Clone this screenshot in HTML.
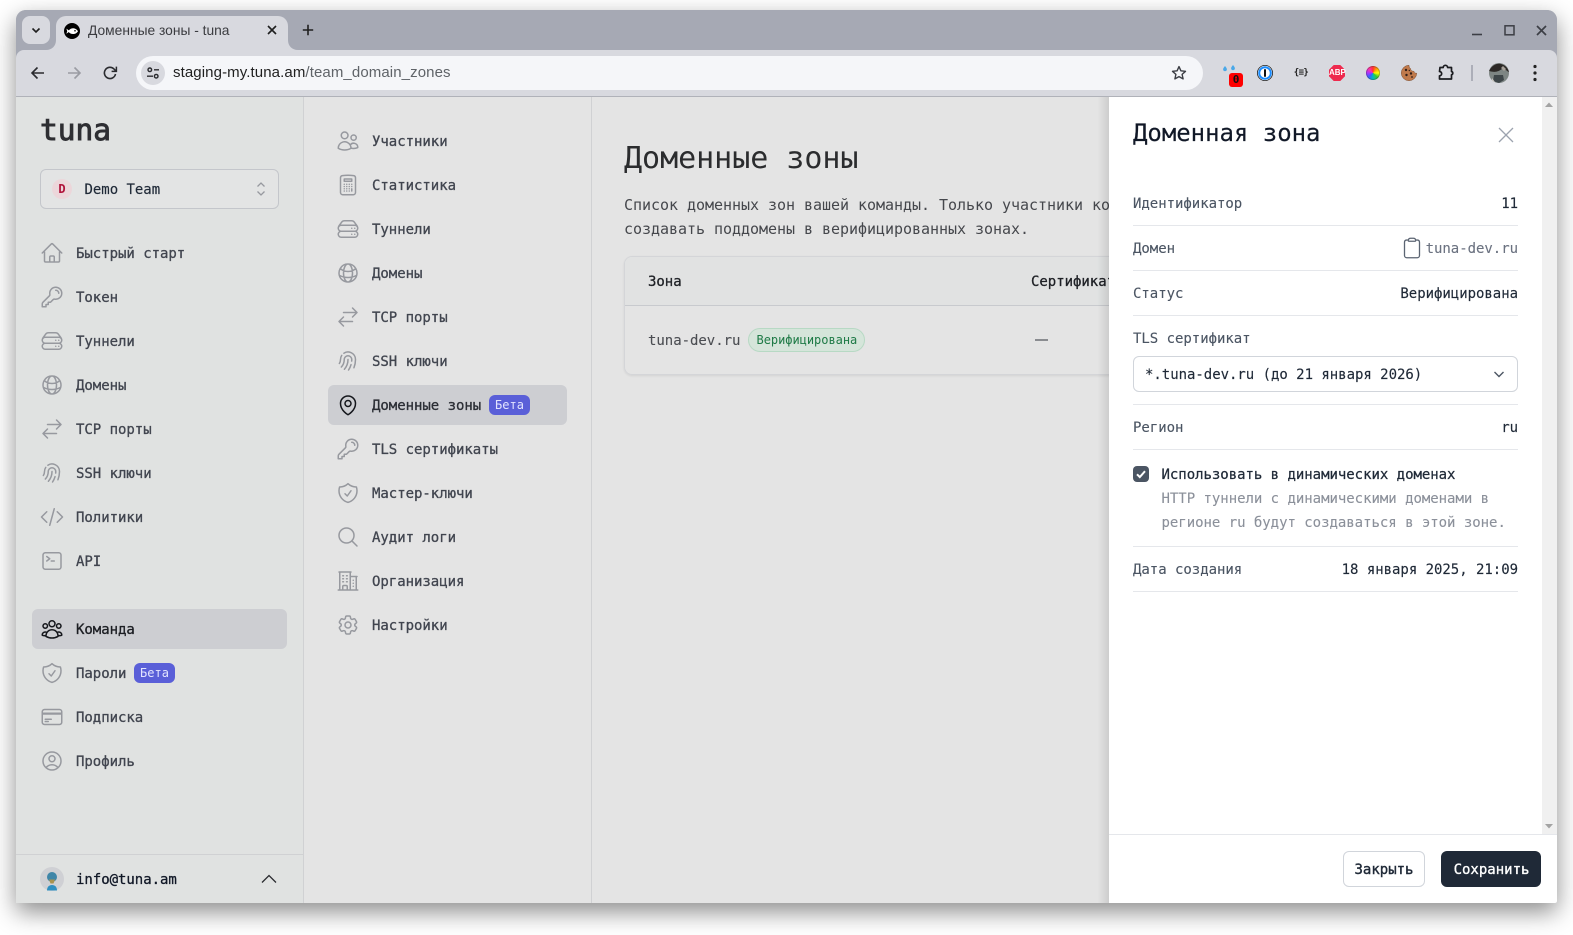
<!DOCTYPE html>
<html lang="ru"><head><meta charset="utf-8"><title>Доменные зоны - tuna</title>
<style>
*{box-sizing:border-box}
html,body{margin:0;padding:0;background:#fff;width:1573px;height:935px;overflow:hidden}
body{font-family:"DejaVu Sans Mono","Liberation Mono","Noto Sans CJK SC",monospace;font-size:14px}
#win{position:absolute;left:16px;top:10px;width:1541px;height:893px;border-radius:10px 10px 2px 2px;box-shadow:0 9px 24px rgba(0,0,0,.45);background:#a6a9b4}
#clip{position:absolute;left:0;top:0;width:1573px;height:935px;overflow:hidden}
.a{position:absolute}
.t{position:absolute;white-space:nowrap;line-height:20px;letter-spacing:-.03px;margin-top:1px}
.z{margin-top:0}
.u{font-family:"Liberation Sans","Noto Sans CJK SC",sans-serif;letter-spacing:0}
.n{color:#41454f;-webkit-text-stroke:.3px #41454f}
.i{position:absolute;width:24px;height:24px;fill:none;stroke:#97999f;stroke-width:1.5;stroke-linecap:round;stroke-linejoin:round}
.on{stroke:#15171c}
.b{position:absolute;width:41px;height:20px;border-radius:6px;background:#5a5fd8;color:#e2e4ff;font-size:12px;line-height:20px;text-align:center}
.line{position:absolute;left:1133px;width:385px;height:1px;background:#e5e7eb}
.lab{color:#4b5563;-webkit-text-stroke:.12px #4b5563}.val{color:#1f2937;-webkit-text-stroke:.15px #1f2937}
.r{text-align:right}
</style></head><body>
<svg width="0" height="0" style="position:absolute">
<defs>
<symbol id="home" viewBox="0 0 24 24"><path d="M2.25 12l8.954-8.955c.44-.439 1.152-.439 1.591 0L21.75 12M4.5 9.75v10.125c0 .621.504 1.125 1.125 1.125H9.75v-4.875c0-.621.504-1.125 1.125-1.125h2.25c.621 0 1.125.504 1.125 1.125V21h4.125c.621 0 1.125-.504 1.125-1.125V9.75M8.25 21h8.25"/></symbol>
<symbol id="key" viewBox="0 0 24 24"><path d="M15.75 5.25a3 3 0 013 3m3 0a6 6 0 01-7.029 5.912c-.563-.097-1.159.026-1.563.43L10.5 17.25H8.25v2.25H6v2.25H2.25v-2.818c0-.597.237-1.17.659-1.591l6.499-6.499c.404-.404.527-1 .43-1.563A6 6 0 1121.75 8.25z"/></symbol>
<symbol id="srv" viewBox="0 0 24 24"><path d="M5.25 14.25h13.5m-13.5 0a3 3 0 01-3-3m3 3a3 3 0 100 6h13.5a3 3 0 100-6m-16.5-3a3 3 0 013-3h13.5a3 3 0 013 3m-19.5 0a4.5 4.5 0 01.9-2.7L5.737 5.1a3.375 3.375 0 012.7-1.35h7.126c1.062 0 2.062.5 2.7 1.35l2.587 3.45a4.5 4.5 0 01.9 2.7m0 0a3 3 0 01-3 3m0 3h.008v.008h-.008v-.008zm0-6h.008v.008h-.008v-.008zm-3 6h.008v.008h-.008v-.008zm0-6h.008v.008h-.008v-.008z"/></symbol>
<symbol id="globe" viewBox="0 0 24 24"><path d="M12 21a9.004 9.004 0 008.716-6.747M12 21a9.004 9.004 0 01-8.716-6.747M12 21c2.485 0 4.5-4.03 4.5-9S14.485 3 12 3m0 18c-2.485 0-4.5-4.03-4.5-9S9.515 3 12 3m0 0a8.997 8.997 0 017.843 4.582M12 3a8.997 8.997 0 00-7.843 4.582m15.686 0A11.953 11.953 0 0112 10.5c-2.998 0-5.74-1.1-7.843-2.918m15.686 0A8.959 8.959 0 0121 12c0 .778-.099 1.533-.284 2.253m0 0A17.919 17.919 0 0112 16.5c-3.162 0-6.133-.815-8.716-2.247m0 0A9.015 9.015 0 013 12c0-1.605.42-3.113 1.157-4.418"/></symbol>
<symbol id="arr" viewBox="0 0 24 24"><path d="M7.5 21L3 16.5m0 0L7.5 12M3 16.5h13.5m0-13.5L21 7.5m0 0L16.5 12M21 7.5H7.5"/></symbol>
<symbol id="fp" viewBox="0 0 24 24"><path d="M7.864 4.243A7.5 7.5 0 0119.5 10.5c0 2.92-.556 5.709-1.568 8.268M5.742 6.364A7.465 7.465 0 004.5 10.5a7.464 7.464 0 01-1.15 3.993m1.989 3.559A11.209 11.209 0 008.25 10.5a3.75 3.75 0 117.5 0c0 .527-.021 1.049-.064 1.565M12 10.5a14.94 14.94 0 01-3.6 9.75m6.633-4.596a18.666 18.666 0 01-2.485 5.33"/></symbol>
<symbol id="code" viewBox="0 0 24 24"><path d="M17.25 6.75L22.5 12l-5.25 5.25m-10.5 0L1.5 12l5.25-5.25m7.5-3l-4.5 16.5"/></symbol>
<symbol id="cmd" viewBox="0 0 24 24"><path d="M6.75 7.5l3 2.25-3 2.25m4.5 0h3m-9 8.25h13.5A2.25 2.25 0 0021 18V6a2.25 2.25 0 00-2.25-2.25H5.25A2.25 2.25 0 003 6v12a2.25 2.25 0 002.25 2.25z"/></symbol>
<symbol id="grp" viewBox="0 0 24 24"><path d="M18 18.72a9.094 9.094 0 003.741-.479 3 3 0 00-4.682-2.72m.94 3.198l.001.031c0 .225-.012.447-.037.666A11.944 11.944 0 0112 21c-2.17 0-4.207-.576-5.963-1.584A6.062 6.062 0 016 18.719m12 0a5.971 5.971 0 00-.941-3.197m0 0A5.995 5.995 0 0012 12.75a5.995 5.995 0 00-5.058 2.772m0 0a3 3 0 00-4.681 2.72 8.986 8.986 0 003.74.477m.94-3.197a5.971 5.971 0 00-.94 3.197M15 6.75a3 3 0 11-6 0 3 3 0 016 0zm6 2.25a2.25 2.25 0 11-4.5 0 2.25 2.25 0 014.5 0zm-13.5 0a2.25 2.25 0 11-4.5 0 2.25 2.25 0 014.5 0z"/></symbol>
<symbol id="shield" viewBox="0 0 24 24"><path d="M9 12.75L11.25 15 15 9.75m-3-7.036A11.959 11.959 0 013.598 6 11.99 11.99 0 003 9.749c0 5.592 3.824 10.29 9 11.623 5.176-1.332 9-6.03 9-11.622 0-1.31-.21-2.571-.598-3.751h-.152c-3.196 0-6.1-1.248-8.25-3.285z"/></symbol>
<symbol id="card" viewBox="0 0 24 24"><path d="M2.25 8.25h19.5M2.25 9h19.5m-16.5 5.25h6m-6 2.25h3m-3.75 3h15a2.25 2.25 0 002.25-2.25V6.75A2.25 2.25 0 0019.5 4.5h-15a2.25 2.25 0 00-2.25 2.25v10.5A2.25 2.25 0 004.5 19.5z"/></symbol>
<symbol id="uc" viewBox="0 0 24 24"><path d="M17.982 18.725A7.488 7.488 0 0012 15.75a7.488 7.488 0 00-5.982 2.975m11.963 0a9 9 0 10-11.963 0m11.963 0A8.966 8.966 0 0112 21a8.966 8.966 0 01-5.982-2.275M15 9.75a3 3 0 11-6 0 3 3 0 016 0z"/></symbol>
<symbol id="users" viewBox="0 0 24 24"><path d="M15 19.128a9.38 9.38 0 002.625.372 9.337 9.337 0 004.121-.952 4.125 4.125 0 00-7.533-2.493M15 19.128v-.003c0-1.113-.285-2.16-.786-3.07M15 19.128v.106A12.318 12.318 0 018.624 21c-2.331 0-4.512-.645-6.374-1.766l-.001-.109a6.375 6.375 0 0111.964-3.07M12 6.375a3.375 3.375 0 11-6.75 0 3.375 3.375 0 016.75 0zm8.25 2.25a2.625 2.625 0 11-5.25 0 2.625 2.625 0 015.25 0z"/></symbol>
<symbol id="calc" viewBox="0 0 24 24"><path d="M15.75 15.75V18m-7.5-6.75h.008v.008H8.25v-.008zm0 2.25h.008v.008H8.25V13.5zm0 2.25h.008v.008H8.25v-.008zm0 2.25h.008v.008H8.25V18zm2.498-6.75h.007v.008h-.007v-.008zm0 2.25h.007v.008h-.007V13.5zm0 2.25h.007v.008h-.007v-.008zm0 2.25h.007v.008h-.007V18zm2.504-6.75h.008v.008h-.008v-.008zm0 2.25h.008v.008h-.008V13.5zm0 2.25h.008v.008h-.008v-.008zm0 2.25h.008v.008h-.008V18zm2.498-6.75h.008v.008h-.008v-.008zm0 2.25h.008v.008h-.008V13.5zM8.25 6h7.5v2.25h-7.5V6zM12 2.25c-1.892 0-3.758.11-5.593.322C5.307 2.7 4.5 3.65 4.5 4.757V19.5a2.25 2.25 0 002.25 2.25h10.5a2.25 2.25 0 002.25-2.25V4.757c0-1.108-.806-2.057-1.907-2.185A48.507 48.507 0 0012 2.25z"/></symbol>
<symbol id="pin" viewBox="0 0 24 24"><path d="M15 10.5a3 3 0 11-6 0 3 3 0 016 0z"/><path d="M19.5 10.5c0 7.142-7.5 11.25-7.5 11.25S4.5 17.642 4.5 10.5a7.5 7.5 0 1115 0z"/></symbol>
<symbol id="mag" viewBox="0 0 24 24"><path d="M21 21l-5.197-5.197m0 0A7.5 7.5 0 105.196 5.196a7.5 7.5 0 0010.607 10.607z"/></symbol>
<symbol id="bld" viewBox="0 0 24 24"><path d="M2.25 21h19.5m-18-18v18m10.5-18v18m6-13.5V21M6.75 6.75h.75m-.75 3h.75m-.75 3h.75m3-6h.75m-.75 3h.75m-.75 3h.75M6.75 21v-3.375c0-.621.504-1.125 1.125-1.125h2.25c.621 0 1.125.504 1.125 1.125V21M3 3h12m-.75 4.5H21m-3.75 3.75h.008v.008h-.008v-.008zm0 3h.008v.008h-.008v-.008zm0 3h.008v.008h-.008v-.008z"/></symbol>
<symbol id="cog" viewBox="0 0 24 24"><path d="M9.594 3.94c.09-.542.56-.94 1.11-.94h2.593c.55 0 1.02.398 1.11.94l.213 1.281c.063.374.313.686.645.87.074.04.147.083.22.127.324.196.72.257 1.075.124l1.217-.456a1.125 1.125 0 011.37.49l1.296 2.247a1.125 1.125 0 01-.26 1.431l-1.003.827c-.293.24-.438.613-.431.992a6.759 6.759 0 010 .255c-.007.378.138.75.43.99l1.005.828c.424.35.534.954.26 1.43l-1.298 2.247a1.125 1.125 0 01-1.369.491l-1.217-.456c-.355-.133-.75-.072-1.076.124a6.57 6.57 0 01-.22.128c-.331.183-.581.495-.644.869l-.213 1.28c-.09.543-.56.941-1.11.941h-2.594c-.55 0-1.02-.398-1.11-.94l-.213-1.281c-.062-.374-.312-.686-.644-.87a6.52 6.52 0 01-.22-.127c-.325-.196-.72-.257-1.076-.124l-1.217.456a1.125 1.125 0 01-1.369-.49l-1.297-2.247a1.125 1.125 0 01.26-1.431l1.004-.827c.292-.24.437-.613.43-.992a6.932 6.932 0 010-.255c.007-.378-.138-.75-.43-.99l-1.004-.828a1.125 1.125 0 01-.26-1.43l1.297-2.247a1.125 1.125 0 011.37-.491l1.216.456c.356.133.751.072 1.076-.124.072-.044.146-.087.22-.128.332-.183.582-.495.644-.869l.214-1.281z"/><path d="M15 12a3 3 0 11-6 0 3 3 0 016 0z"/></symbol>
<symbol id="clipb" viewBox="0 0 24 24"><path d="M15.666 3.888A2.25 2.25 0 0013.5 2.25h-3c-1.03 0-1.9.693-2.166 1.638m7.332 0c.055.194.084.4.084.612v0a.75.75 0 01-.75.75H9a.75.75 0 01-.75-.75v0c0-.212.03-.418.084-.612m7.332 0c.646.049 1.288.11 1.927.184 1.1.128 1.907 1.077 1.907 2.185V19.5a2.25 2.25 0 01-2.25 2.25H6.75A2.25 2.25 0 014.5 19.5V6.257c0-1.108.806-2.057 1.907-2.185a48.208 48.208 0 011.927-.184"/></symbol>
</defs>
</svg>

<div id="win"></div>
<div id="clip">
<!-- window chrome -->
<div class="a" style="left:16px;top:10px;width:1541px;height:40px;background:#a6a9b4;border-radius:10px 10px 0 0"></div>
<div class="a" style="left:16px;top:50px;width:1541px;height:47px;background:#d8d9df;border-radius:8px 8px 0 0;border-bottom:1px solid #b0b2b9"></div>
<div class="a" style="left:22px;top:16px;width:28px;height:28px;border-radius:8px;background:#d8d9df"></div>
<svg class="a" style="left:30px;top:24px" width="12" height="12" viewBox="0 0 12 12" fill="none" stroke="#1f1f1f" stroke-width="1.6"><path d="M2.5 4.5L6 8l3.5-3.5"/></svg>
<div class="a" style="left:56px;top:16px;width:232px;height:34px;background:#d8d9df;border-radius:10px 10px 0 0"></div>
<svg class="a" style="left:288px;top:40px" width="10" height="10" viewBox="0 0 10 10"><path d="M0 0C0 6 4 10 10 10H0z" fill="#d8d9df"/></svg>
<svg class="a" style="left:46px;top:40px" width="10" height="10" viewBox="0 0 10 10"><path d="M10 0C10 6 6 10 0 10H10z" fill="#d8d9df"/></svg>
<svg class="a" style="left:64px;top:23px" width="16" height="16" viewBox="0 0 16 16"><circle cx="8" cy="8" r="8" fill="#000"/><path d="M2.4 5.600L4.800 7.400C6.200 5.600 9 4.800 11 5.600 12.400 6.200 13.400 7.200 14 8.200 13.200 9.600 11.600 10.800 9.800 11 7.600 11.300 5.800 10.400 4.800 9L2.400 10.800 3.200 8.200z" fill="#fff"/><circle cx="11" cy="7.800" r=".8" fill="#000"/></svg>
<div class="t u z" style="left:88px;top:21px;font-size:13.800px;color:#3b3c40">Доменные зоны - tuna</div>
<svg class="a" style="left:266px;top:24px" width="12" height="12" viewBox="0 0 12 12" fill="none" stroke="#1f1f1f" stroke-width="1.6"><path d="M2 2l8 8M10 2l-8 8"/></svg>
<svg class="a" style="left:302px;top:24px" width="12" height="12" viewBox="0 0 12 12" fill="none" stroke="#1f1f1f" stroke-width="1.6"><path d="M6 .8v10.400M.8 6h10.400"/></svg>
<svg class="a" style="left:1472px;top:24px" width="80" height="14" viewBox="0 0 80 14" fill="none" stroke="#3c3e45" stroke-width="1.6"><path d="M0 10.500h10"/><rect x="33" y="1.800" width="9" height="9" stroke-width="1.500"/><path d="M65 2l9 9M74 2l-9 9" stroke-width="1.700"/></svg>

<svg class="a" style="left:29px;top:64px" width="18" height="18" viewBox="0 0 18 18" fill="none" stroke="#2a2b2f" stroke-width="1.6"><path d="M15 9H3.500M8.500 3.500L3 9l5.500 5.500"/></svg>
<svg class="a" style="left:65px;top:64px" width="18" height="18" viewBox="0 0 18 18" fill="none" stroke="#9a9ca3" stroke-width="1.6"><path d="M3 9h11.500M9.500 3.500L15 9l-5.500 5.500"/></svg>
<svg class="a" style="left:101px;top:64px" width="18" height="18" viewBox="0 0 18 18" fill="none" stroke="#2a2b2f" stroke-width="1.6"><path d="M14.500 10a5.600 5.600 0 11-1.500-5L15 7"/><path d="M15.400 2.600V7.400H10.600" stroke-width="1.500"/></svg>

<div class="a" style="left:136px;top:56px;width:1067px;height:34px;border-radius:17px;background:#f5f6f9"></div>
<div class="a" style="left:141px;top:61px;width:24px;height:24px;border-radius:12px;background:#d8d9df"></div>
<svg class="a" style="left:146px;top:66px" width="14" height="14" viewBox="0 0 14 14" fill="none" stroke="#2a2b2f" stroke-width="1.4"><circle cx="3.800" cy="3.800" r="1.800"/><path d="M8 3.800h5M1 10.200h6"/><circle cx="10.200" cy="10.200" r="1.800"/></svg>
<div class="t u" style="left:173px;top:62px;font-size:15px;letter-spacing:.1px;color:#1f1f1f">staging-my.tuna.am<span style="color:#5f6368">/team_domain_zones</span></div>
<svg class="a" style="left:1171px;top:65px" width="16" height="16" viewBox="0 0 16 16" fill="none" stroke="#3c3e45" stroke-width="1.4" stroke-linejoin="round"><path d="M8 1.600l1.900 4.200 4.600.5-3.400 3.100 1 4.500L8 11.600l-4.100 2.300 1-4.500L1.500 6.300l4.600-.5z"/></svg>

<!-- extensions -->
<svg class="a" style="left:1222px;top:63px" width="24" height="26" viewBox="0 0 24 26"><path d="M3 3c1.200 1.500 1.900 2.400 1.900 3.300a1.900 1.900 0 01-3.800 0c0-.9.700-1.800 1.900-3.300zM11 2c1.200 1.500 1.900 2.400 1.900 3.300a1.900 1.900 0 01-3.800 0c0-.9.700-1.800 1.900-3.300z" fill="#4aa8e8"/><rect x="7" y="10" width="14" height="14" rx="3" fill="#f00"/></svg>
<div class="t z" style="left:1231px;top:70px;width:10px;text-align:center;font-size:11px;font-weight:bold;color:#111">0</div>
<svg class="a" style="left:1257px;top:65px" width="16" height="16" viewBox="0 0 16 16"><circle cx="8" cy="8" r="7.600" fill="#fff" stroke="#1a1a1a" stroke-width=".8"/><circle cx="8" cy="8" r="5.800" fill="none" stroke="#1a8cff" stroke-width="2"/><rect x="7" y="4" width="2" height="8" rx="1" fill="#111"/></svg>
<div class="t z" style="left:1291px;top:63px;width:20px;text-align:center;font-size:9px;font-weight:bold;color:#222;letter-spacing:-.6px">{≡}</div>
<svg class="a" style="left:1329px;top:65px" width="16" height="16" viewBox="0 0 16 16"><path d="M4.700 0h6.600L16 4.700v6.600L11.300 16H4.700L0 11.300V4.700z" fill="#ee2a4e"/></svg>
<div class="t u z" style="left:1329px;top:63px;width:16px;text-align:center;font-size:8px;font-weight:bold;color:#fff">ABP</div>
<div class="a" style="left:1366px;top:66px;width:14px;height:14px;border-radius:50%;background:conic-gradient(#f33,#fa0,#ff0,#3c3,#0bb,#36f,#a3f,#f3a,#f33);box-shadow:inset 0 0 0 1px rgba(40,40,40,.3)"></div>
<svg class="a" style="left:1401px;top:65px" width="16" height="16" viewBox="0 0 16 16"><path d="M8 .3a7.700 7.700 0 107.700 7.900c-1.700.2-2.600-.7-2.800-2C11.300 6.400 9.700 5.500 9.700 3.700 8.500 3.300 8 2 8 .3z" fill="#c07a4c" stroke="#7a4a2c" stroke-width=".5"/><g fill="#33201a"><circle cx="5" cy="5" r="1.200"/><circle cx="10" cy="8.500" r="1.200"/><circle cx="5.500" cy="10" r="1.200"/><circle cx="11" cy="12" r=".9"/><circle cx="8.300" cy="5.500" r=".7"/></g></svg>
<svg class="a" style="left:1437px;top:64px" width="18" height="18" viewBox="0 0 18 18" fill="none" stroke="#1b1c20" stroke-width="1.700" stroke-linejoin="round"><path d="M3 3.500h3.200a2.200 2.200 0 014.400 0h3.900v4a1.700 1.700 0 010 3.300v4.200H2.500v-3.200a2 2 0 000-4.300z"/></svg>
<div class="a" style="left:1471px;top:65px;width:2px;height:16px;background:#acaeb8"></div>
<svg class="a" style="left:1489px;top:63px" width="20" height="20" viewBox="0 0 20 20"><circle cx="10" cy="10" r="10" fill="#7d8583"/><path d="M0 8C3 2 8 0 12 1c4 1 7 4 8 8-3-1-4-4-7-3-3 2-6 4-13 2z" fill="#2c2826"/><path d="M5 12h9l1 5-5 3-6-2z" fill="#3e4649"/><path d="M14 3l3 3-2 2-3-3z" fill="#a8a29a"/><path d="M3 15l3 4-3-1z" fill="#c9c6c0"/></svg>
<svg class="a" style="left:1532px;top:64px" width="6" height="18" viewBox="0 0 6 18" fill="#222"><circle cx="3" cy="2.500" r="1.600"/><circle cx="3" cy="9" r="1.600"/><circle cx="3" cy="15.500" r="1.600"/></svg>

<!-- left sidebar -->
<div class="a" style="left:16px;top:97px;width:288px;height:806px;background:#e0e2e1;border-right:1px solid #d0d1d3"></div>
<div class="a" style="left:304px;top:97px;width:288px;height:806px;background:#e4e4e4;border-right:1px solid #d0d1d3"></div>
<div class="a" style="left:592px;top:97px;width:517px;height:806px;background:#e4e4e4"></div>

<div class="t z" style="left:40px;top:115px;line-height:30px;font-size:29.500px;color:#2e2f33;-webkit-text-stroke:.9px #2e2f33">tuna</div>
<div class="a" style="left:40px;top:169px;width:239px;height:40px;border:1px solid #c4c6cb;border-radius:6px;background:#e3e4e4"></div>
<div class="a" style="left:52px;top:179px;width:20px;height:20px;border-radius:50%;background:#ecd6da;color:#b0123a;font-size:12px;font-weight:bold;line-height:20px;text-align:center">D</div>
<div class="t" style="left:84.500px;top:179px;color:#1f2937;-webkit-text-stroke:.15px #1f2937">Demo Team</div>
<svg class="a" style="left:255px;top:181px" width="12" height="16" viewBox="0 0 12 16" fill="none" stroke="#97999f" stroke-width="1.300"><path d="M2.500 5.500L6 2l3.500 3.500M2.500 10.500L6 14l3.500-3.500"/></svg>

<svg class="i" style="left:40px;top:241px"><use href="#home"/></svg><div class="t n" style="left:76px;top:243px">Быстрый старт</div>
<svg class="i" style="left:40px;top:285px"><use href="#key"/></svg><div class="t n" style="left:76px;top:287px">Токен</div>
<svg class="i" style="left:40px;top:329px"><use href="#srv"/></svg><div class="t n" style="left:76px;top:331px">Туннели</div>
<svg class="i" style="left:40px;top:373px"><use href="#globe"/></svg><div class="t n" style="left:76px;top:375px">Домены</div>
<svg class="i" style="left:40px;top:417px"><use href="#arr"/></svg><div class="t n" style="left:76px;top:419px">TCP порты</div>
<svg class="i" style="left:40px;top:461px"><use href="#fp"/></svg><div class="t n" style="left:76px;top:463px">SSH ключи</div>
<svg class="i" style="left:40px;top:505px"><use href="#code"/></svg><div class="t n" style="left:76px;top:507px">Политики</div>
<svg class="i" style="left:40px;top:549px"><use href="#cmd"/></svg><div class="t n" style="left:76px;top:551px">API</div>

<div class="a" style="left:32px;top:609px;width:255px;height:40px;border-radius:6px;background:#cdced2"></div>
<svg class="i on" style="left:40px;top:617px"><use href="#grp"/></svg><div class="t n" style="left:76px;top:619px;color:#1c1e23;-webkit-text-stroke-color:#1c1e23">Команда</div>
<svg class="i" style="left:40px;top:661px"><use href="#shield"/></svg><div class="t n" style="left:76px;top:663px">Пароли</div><div class="b" style="left:134px;top:663px">Бета</div>
<svg class="i" style="left:40px;top:705px"><use href="#card"/></svg><div class="t n" style="left:76px;top:707px">Подписка</div>
<svg class="i" style="left:40px;top:749px"><use href="#uc"/></svg><div class="t n" style="left:76px;top:751px">Профиль</div>

<div class="a" style="left:16px;top:854px;width:287px;height:1px;background:#d0d1d3"></div>
<svg class="a" style="left:40px;top:867px" width="24" height="24" viewBox="0 0 24 24"><circle cx="12" cy="12" r="12" fill="#cfd0d4"/><circle cx="12" cy="10" r="5" fill="#3f86a8"/><path d="M9 12.500h6l-1.500 4h-3z" fill="#a8924e"/><path d="M7 23.500c0-3.500 2-5.500 5-5.500s5 2 5 5.500z" fill="#2f8fc0"/></svg>
<div class="t" style="left:76px;top:869px;color:#111827;-webkit-text-stroke:.3px #111827">info@tuna.am</div>
<svg class="a" style="left:261px;top:872px" width="16" height="14" viewBox="0 0 16 14" fill="none" stroke="#2a2b2f" stroke-width="1.300"><path d="M1 10.500L8 3.500l7 7"/></svg>

<!-- second nav -->
<svg class="i" style="left:336px;top:129px"><use href="#users"/></svg><div class="t n" style="left:372px;top:131px">Участники</div>
<svg class="i" style="left:336px;top:173px"><use href="#calc"/></svg><div class="t n" style="left:372px;top:175px">Статистика</div>
<svg class="i" style="left:336px;top:217px"><use href="#srv"/></svg><div class="t n" style="left:372px;top:219px">Туннели</div>
<svg class="i" style="left:336px;top:261px"><use href="#globe"/></svg><div class="t n" style="left:372px;top:263px">Домены</div>
<svg class="i" style="left:336px;top:305px"><use href="#arr"/></svg><div class="t n" style="left:372px;top:307px">TCP порты</div>
<svg class="i" style="left:336px;top:349px"><use href="#fp"/></svg><div class="t n" style="left:372px;top:351px">SSH ключи</div>
<div class="a" style="left:328px;top:385px;width:239px;height:40px;border-radius:6px;background:#cdced2"></div>
<svg class="i on" style="left:336px;top:393px"><use href="#pin"/></svg><div class="t n" style="left:372px;top:395px;color:#2b2e35;-webkit-text-stroke-color:#2b2e35">Доменные зоны</div><div class="b" style="left:489px;top:395px">Бета</div>
<svg class="i" style="left:336px;top:437px"><use href="#key"/></svg><div class="t n" style="left:372px;top:439px">TLS сертификаты</div>
<svg class="i" style="left:336px;top:481px"><use href="#shield"/></svg><div class="t n" style="left:372px;top:483px">Мастер-ключи</div>
<svg class="i" style="left:336px;top:525px"><use href="#mag"/></svg><div class="t n" style="left:372px;top:527px">Аудит логи</div>
<svg class="i" style="left:336px;top:569px"><use href="#bld"/></svg><div class="t n" style="left:372px;top:571px">Организация</div>
<svg class="i" style="left:336px;top:613px"><use href="#cog"/></svg><div class="t n" style="left:372px;top:615px">Настройки</div>

<!-- main -->
<div class="t z" style="left:624px;top:141px;line-height:36px;font-size:30px;color:#2b2c2e">Доменные зоны</div>
<div class="t z" style="left:624px;top:195px;font-size:15px;color:#45474c">Список доменных зон вашей команды. Только участники команды могут</div>
<div class="t z" style="left:624px;top:219px;font-size:15px;color:#45474c">создавать поддомены в верифицированных зонах.</div>
<div class="a" style="left:623.500px;top:256px;width:600px;height:119px;border:1px solid #d4d5d8;border-radius:8px;box-shadow:0 1px 2px rgba(0,0,0,.08);overflow:hidden">
  <div class="a" style="left:0;top:0;width:100%;height:49px;background:#e1e2e2;border-bottom:1px solid #c8cace"></div>
</div>
<div class="t" style="left:648px;top:271px;color:#1f2126;-webkit-text-stroke:.3px #1f2126">Зона</div>
<div class="t" style="left:1031px;top:271px;color:#1f2126;-webkit-text-stroke:.3px #1f2126">Сертификат</div>
<div class="t" style="left:648px;top:330px;color:#4b4d52;-webkit-text-stroke:.1px #4b4d52">tuna-dev.ru</div>
<div class="a" style="left:748px;top:328px;width:117px;height:24px;border-radius:12px;background:#d5e5da;border:1px solid #b7d9c4"></div>
<div class="t z" style="left:756.500px;top:330px;font-size:12px;color:#1e7a46">Верифицирована</div>
<div class="a" style="left:1035px;top:339px;width:13px;height:1.500px;background:#8a8c90"></div>

<!-- drawer shadow -->
<div class="a" style="left:1097px;top:97px;width:12px;height:806px;background:linear-gradient(90deg,rgba(0,0,0,0),rgba(0,0,0,.1))"></div>

<!-- drawer -->
<div class="a" style="left:1109px;top:97px;width:448px;height:806px;background:#fff;border-radius:0 0 2px 0"></div>
<div class="a" style="left:1542px;top:97px;width:15px;height:737px;background:#f0f0f0"></div>
<svg class="a" style="left:1544px;top:101px" width="10" height="8" viewBox="0 0 10 8"><path d="M5 1.500L9 6H1z" fill="#a3a3a3"/></svg>
<svg class="a" style="left:1544px;top:822px" width="10" height="8" viewBox="0 0 10 8"><path d="M5 6.500L9 2H1z" fill="#a3a3a3"/></svg>
<div class="a" style="left:1109px;top:834px;width:448px;height:1px;background:#e5e7eb"></div>

<div class="t z" style="left:1133px;top:118px;line-height:30px;font-size:24px;color:#111827;-webkit-text-stroke:.15px #111827">Доменная зона</div>
<svg class="a" style="left:1498px;top:127px" width="16" height="16" viewBox="0 0 16 16" fill="none" stroke="#9ca3af" stroke-width="1.300"><path d="M1 1l14 14M15 1L1 15"/></svg>

<div class="t lab" style="left:1133px;top:193px">Идентификатор</div>
<div class="t val r" style="right:55px;top:193px">11</div>
<div class="line" style="top:225px"></div>
<div class="t lab" style="left:1133px;top:238px">Домен</div>
<svg class="i" style="left:1400px;top:236px;stroke:#5b6472;stroke-width:1.300"><use href="#clipb"/></svg>
<div class="t" style="right:55px;top:238px;color:#6b7280;-webkit-text-stroke:.1px #6b7280">tuna-dev.ru</div>
<div class="line" style="top:270px"></div>
<div class="t lab" style="left:1133px;top:283px">Статус</div>
<div class="t val" style="right:55px;top:283px">Верифицирована</div>
<div class="line" style="top:315px"></div>
<div class="t lab" style="left:1133px;top:328px">TLS сертификат</div>
<div class="a" style="left:1133px;top:356px;width:385px;height:36px;border:1px solid #d1d5db;border-radius:6px;background:#fff"></div>
<div class="t val" style="left:1145px;top:364px">*.tuna-dev.ru (до 21 января 2026)</div>
<svg class="a" style="left:1493px;top:368px" width="12" height="12" viewBox="0 0 12 12" fill="none" stroke="#4b5563" stroke-width="1.400"><path d="M1.500 4L6 8.500 10.500 4"/></svg>
<div class="line" style="top:404px"></div>
<div class="t lab" style="left:1133px;top:417px">Регион</div>
<div class="t val" style="right:55px;top:417px">ru</div>
<div class="line" style="top:449px"></div>
<div class="a" style="left:1133px;top:466px;width:16px;height:16px;border-radius:4px;background:#4b5563"></div>
<svg class="a" style="left:1133px;top:466px" width="16" height="16" viewBox="0 0 16 16" fill="none" stroke="#fff" stroke-width="2"><path d="M4 8.300l2.800 2.700L12 5.200"/></svg>
<div class="t" style="left:1161.500px;top:464px;color:#1f2937;-webkit-text-stroke:.25px #1f2937">Использовать в динамических доменах</div>
<div class="t" style="left:1161.500px;top:488px;color:#8b909a;-webkit-text-stroke:.1px #8b909a">HTTP туннели с динамическими доменами в</div>
<div class="t" style="left:1161.500px;top:512px;color:#8b909a;-webkit-text-stroke:.1px #8b909a">регионе ru будут создаваться в этой зоне.</div>
<div class="line" style="top:546px"></div>
<div class="t lab" style="left:1133px;top:559px">Дата создания</div>
<div class="t val" style="right:55px;top:559px">18 января 2025, 21:09</div>
<div class="line" style="top:591px"></div>

<div class="a" style="left:1343px;top:851px;width:82px;height:36px;border:1px solid #d1d5db;border-radius:6px;background:#fff;color:#1f2937;line-height:36px;text-align:center;-webkit-text-stroke:.4px #1f2937">Закрыть</div>
<div class="a" style="left:1441px;top:851px;width:100px;height:36px;border-radius:6px;background:#1f2937;color:#fff;line-height:38px;text-align:center;padding-left:1px;-webkit-text-stroke:.35px #fff">Сохранить</div>
</div>
</body></html>
